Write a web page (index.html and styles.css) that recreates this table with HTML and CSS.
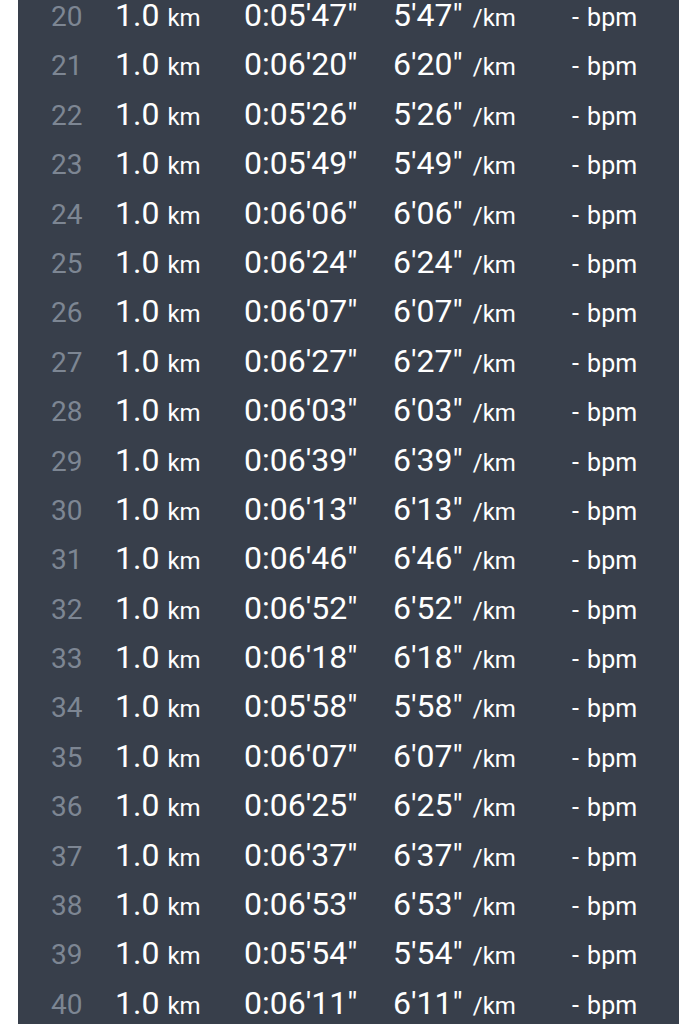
FILE: index.html
```html
<!DOCTYPE html>
<html>
<head>
<meta charset="utf-8">
<link rel="stylesheet" href="styles.css">
</head>
<body>
<div class="panel">
  <div class="list">
    <div class="row"><span class="num">20</span><span class="dist">1.0<small>km</small></span><span class="time">0:05'47"</span><span class="pace">5'47"<small>/km</small></span><span class="hr">- bpm</span></div>
    <div class="row"><span class="num">21</span><span class="dist">1.0<small>km</small></span><span class="time">0:06'20"</span><span class="pace">6'20"<small>/km</small></span><span class="hr">- bpm</span></div>
    <div class="row"><span class="num">22</span><span class="dist">1.0<small>km</small></span><span class="time">0:05'26"</span><span class="pace">5'26"<small>/km</small></span><span class="hr">- bpm</span></div>
    <div class="row"><span class="num">23</span><span class="dist">1.0<small>km</small></span><span class="time">0:05'49"</span><span class="pace">5'49"<small>/km</small></span><span class="hr">- bpm</span></div>
    <div class="row"><span class="num">24</span><span class="dist">1.0<small>km</small></span><span class="time">0:06'06"</span><span class="pace">6'06"<small>/km</small></span><span class="hr">- bpm</span></div>
    <div class="row"><span class="num">25</span><span class="dist">1.0<small>km</small></span><span class="time">0:06'24"</span><span class="pace">6'24"<small>/km</small></span><span class="hr">- bpm</span></div>
    <div class="row"><span class="num">26</span><span class="dist">1.0<small>km</small></span><span class="time">0:06'07"</span><span class="pace">6'07"<small>/km</small></span><span class="hr">- bpm</span></div>
    <div class="row"><span class="num">27</span><span class="dist">1.0<small>km</small></span><span class="time">0:06'27"</span><span class="pace">6'27"<small>/km</small></span><span class="hr">- bpm</span></div>
    <div class="row"><span class="num">28</span><span class="dist">1.0<small>km</small></span><span class="time">0:06'03"</span><span class="pace">6'03"<small>/km</small></span><span class="hr">- bpm</span></div>
    <div class="row"><span class="num">29</span><span class="dist">1.0<small>km</small></span><span class="time">0:06'39"</span><span class="pace">6'39"<small>/km</small></span><span class="hr">- bpm</span></div>
    <div class="row"><span class="num">30</span><span class="dist">1.0<small>km</small></span><span class="time">0:06'13"</span><span class="pace">6'13"<small>/km</small></span><span class="hr">- bpm</span></div>
    <div class="row"><span class="num">31</span><span class="dist">1.0<small>km</small></span><span class="time">0:06'46"</span><span class="pace">6'46"<small>/km</small></span><span class="hr">- bpm</span></div>
    <div class="row"><span class="num">32</span><span class="dist">1.0<small>km</small></span><span class="time">0:06'52"</span><span class="pace">6'52"<small>/km</small></span><span class="hr">- bpm</span></div>
    <div class="row"><span class="num">33</span><span class="dist">1.0<small>km</small></span><span class="time">0:06'18"</span><span class="pace">6'18"<small>/km</small></span><span class="hr">- bpm</span></div>
    <div class="row"><span class="num">34</span><span class="dist">1.0<small>km</small></span><span class="time">0:05'58"</span><span class="pace">5'58"<small>/km</small></span><span class="hr">- bpm</span></div>
    <div class="row"><span class="num">35</span><span class="dist">1.0<small>km</small></span><span class="time">0:06'07"</span><span class="pace">6'07"<small>/km</small></span><span class="hr">- bpm</span></div>
    <div class="row"><span class="num">36</span><span class="dist">1.0<small>km</small></span><span class="time">0:06'25"</span><span class="pace">6'25"<small>/km</small></span><span class="hr">- bpm</span></div>
    <div class="row"><span class="num">37</span><span class="dist">1.0<small>km</small></span><span class="time">0:06'37"</span><span class="pace">6'37"<small>/km</small></span><span class="hr">- bpm</span></div>
    <div class="row"><span class="num">38</span><span class="dist">1.0<small>km</small></span><span class="time">0:06'53"</span><span class="pace">6'53"<small>/km</small></span><span class="hr">- bpm</span></div>
    <div class="row"><span class="num">39</span><span class="dist">1.0<small>km</small></span><span class="time">0:05'54"</span><span class="pace">5'54"<small>/km</small></span><span class="hr">- bpm</span></div>
    <div class="row"><span class="num">40</span><span class="dist">1.0<small>km</small></span><span class="time">0:06'11"</span><span class="pace">6'11"<small>/km</small></span><span class="hr">- bpm</span></div>
  </div>
</div>
</body>
</html>
```

FILE: styles.css
```css
html, body {
  margin: 0;
  padding: 0;
  background: #ffffff;
  height: 1024px;
  overflow: hidden;
}
.panel {
  margin-left: 18px;
  width: 661px;
  height: 1024px;
  background: #383f4b;
  overflow: hidden;
}
.list {
  margin-top: -9px;
  padding-left: 33px;
  font-family: Roboto, "Noto Sans", sans-serif;
  color: #ffffff;
}
.row {
  display: grid;
  grid-template-columns: 64px 129px 149px 179px 1fr;
  height: 49.4px;
  line-height: 49.4px;
  align-items: baseline;
  white-space: nowrap;
}
.num {
  font-size: 28px;
  color: #7d8693;
}
.dist, .time, .pace {
  font-size: 32px;
}
.row small {
  font-size: 24px;
  margin-left: 8px;
}
.pace small {
  margin-left: 10px;
}
.hr {
  font-size: 25px;
  word-spacing: 2px;
}
```
